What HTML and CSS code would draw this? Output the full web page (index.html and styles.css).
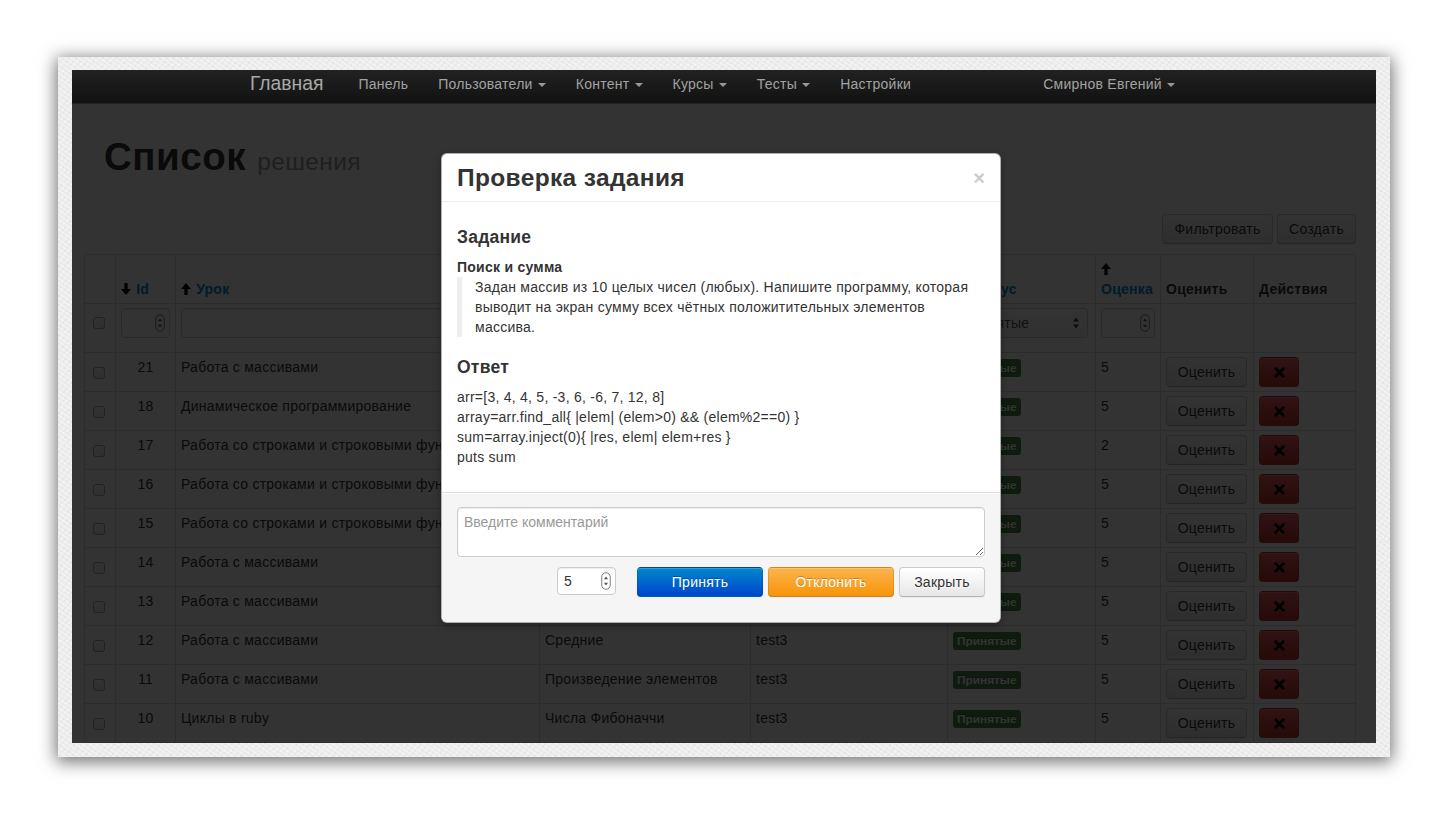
FILE: index.html
```html
<!DOCTYPE html>
<html lang="ru">
<head>
<meta charset="utf-8">
<title>Список решения</title>
<link rel="stylesheet" href="styles.css">
</head>
<body>
<svg class="defs" width="0" height="0" aria-hidden="true">
  <symbol id="i-up" viewBox="0 0 10 12"><path d="M5 0l5 6H6.6v6H3.4V6H0z"/></symbol>
  <symbol id="i-down" viewBox="0 0 10 12"><path d="M3.4 0h3.2v6H10l-5 6-5-6h3.4z"/></symbol>
  <symbol id="i-remove" viewBox="0 0 12 12"><path d="M2 2l8 8M10 2l-8 8" stroke="#000" stroke-width="3" stroke-linecap="square"/></symbol>
  <symbol id="i-step" viewBox="0 0 10 18"><rect x="0.75" y="0.75" width="8.5" height="16.5" rx="4.2" fill="#fff" stroke="#7d7d7d" stroke-width="1"/><path d="M3 7.2L5 4.4 7 7.2z M3 10.8L5 13.6 7 10.8z" fill="#555"/></symbol>
  <symbol id="i-sel" viewBox="0 0 8 14"><path d="M1 5.5L4 1.5 7 5.5z M1 8.5L4 12.5 7 8.5z" fill="#444"/></symbol>
</svg>
<div class="stage">
  <div class="frame">
    <div class="viewport">
      <header class="navbar">
        <div class="nav-inner">
          <a class="brand">Главная</a>
          <ul class="nav">
            <li><a>Панель</a></li>
            <li><a>Пользователи <b class="caret"></b></a></li>
            <li><a>Контент <b class="caret"></b></a></li>
            <li><a>Курсы <b class="caret"></b></a></li>
            <li><a>Тесты <b class="caret"></b></a></li>
            <li><a>Настройки</a></li>
          </ul>
          <ul class="nav nav-right">
            <li><a>Смирнов Евгений <b class="caret"></b></a></li>
          </ul>
        </div>
      </header>

      <main class="content">
        <h1 class="page-title">Список <small>решения</small></h1>
        <div class="toolbar">
          <button class="btn btn-filter">Фильтровать</button>
          <button class="btn btn-create">Создать</button>
        </div>

        <table class="grid">
          <colgroup>
            <col class="c-check"><col class="c-id"><col class="c-lesson"><col class="c-task"><col class="c-user"><col class="c-status"><col class="c-mark"><col class="c-rate"><col class="c-act">
          </colgroup>
          <thead>
            <tr class="head">
              <th></th>
              <th><a class="sort"><svg class="arr"><use href="#i-down"/></svg> Id</a></th>
              <th><a class="sort"><svg class="arr"><use href="#i-up"/></svg> Урок</a></th>
              <th><a class="sort"><svg class="arr"><use href="#i-up"/></svg> Задача</a></th>
              <th><a class="sort"><svg class="arr"><use href="#i-up"/></svg> Ученик</a></th>
              <th><a class="sort"><svg class="arr"><use href="#i-up"/></svg> Статус</a></th>
              <th><a class="sort"><svg class="arr"><use href="#i-up"/></svg> Оценка</a></th>
              <th>Оценить</th>
              <th>Действия</th>
            </tr>
            <tr class="filters">
              <th><input class="check check-f" type="checkbox"></th>
              <th><div class="num num-f"><span></span><svg class="step"><use href="#i-step"/></svg></div></th>
              <th><input class="field" type="text"></th>
              <th><input class="field" type="text"></th>
              <th><input class="field" type="text"></th>
              <th><div class="select"><span>Принятые</span><svg class="sel"><use href="#i-sel"/></svg></div></th>
              <th><div class="num num-f"><span></span><svg class="step"><use href="#i-step"/></svg></div></th>
              <th></th>
              <th></th>
            </tr>
          </thead>
          <tbody>
            <tr><td class="cb"><input class="check" type="checkbox"></td><td class="id">21</td><td>Работа с массивами</td><td>Поиск и сумма</td><td>test3</td><td><span class="label">Принятые</span></td><td>5</td><td><button class="btn btn-rate">Оценить</button></td><td><button class="btn btn-danger"><svg class="rm"><use href="#i-remove"/></svg></button></td></tr>
            <tr><td class="cb"><input class="check" type="checkbox"></td><td class="id">18</td><td>Динамическое программирование</td><td>Задача о рюкзаке</td><td>test3</td><td><span class="label">Принятые</span></td><td>5</td><td><button class="btn btn-rate">Оценить</button></td><td><button class="btn btn-danger"><svg class="rm"><use href="#i-remove"/></svg></button></td></tr>
            <tr><td class="cb"><input class="check" type="checkbox"></td><td class="id">17</td><td>Работа со строками и строковыми функциями</td><td>Палиндромы</td><td>test3</td><td><span class="label">Принятые</span></td><td>2</td><td><button class="btn btn-rate">Оценить</button></td><td><button class="btn btn-danger"><svg class="rm"><use href="#i-remove"/></svg></button></td></tr>
            <tr><td class="cb"><input class="check" type="checkbox"></td><td class="id">16</td><td>Работа со строками и строковыми функциями</td><td>Подсчёт слов</td><td>test3</td><td><span class="label">Принятые</span></td><td>5</td><td><button class="btn btn-rate">Оценить</button></td><td><button class="btn btn-danger"><svg class="rm"><use href="#i-remove"/></svg></button></td></tr>
            <tr><td class="cb"><input class="check" type="checkbox"></td><td class="id">15</td><td>Работа со строками и строковыми функциями</td><td>Замена символов</td><td>test3</td><td><span class="label">Принятые</span></td><td>5</td><td><button class="btn btn-rate">Оценить</button></td><td><button class="btn btn-danger"><svg class="rm"><use href="#i-remove"/></svg></button></td></tr>
            <tr><td class="cb"><input class="check" type="checkbox"></td><td class="id">14</td><td>Работа с массивами</td><td>Максимум</td><td>test3</td><td><span class="label">Принятые</span></td><td>5</td><td><button class="btn btn-rate">Оценить</button></td><td><button class="btn btn-danger"><svg class="rm"><use href="#i-remove"/></svg></button></td></tr>
            <tr><td class="cb"><input class="check" type="checkbox"></td><td class="id">13</td><td>Работа с массивами</td><td>Сортировка</td><td>test3</td><td><span class="label">Принятые</span></td><td>5</td><td><button class="btn btn-rate">Оценить</button></td><td><button class="btn btn-danger"><svg class="rm"><use href="#i-remove"/></svg></button></td></tr>
            <tr><td class="cb"><input class="check" type="checkbox"></td><td class="id">12</td><td>Работа с массивами</td><td>Средние</td><td>test3</td><td><span class="label">Принятые</span></td><td>5</td><td><button class="btn btn-rate">Оценить</button></td><td><button class="btn btn-danger"><svg class="rm"><use href="#i-remove"/></svg></button></td></tr>
            <tr><td class="cb"><input class="check" type="checkbox"></td><td class="id">11</td><td>Работа с массивами</td><td>Произведение элементов</td><td>test3</td><td><span class="label">Принятые</span></td><td>5</td><td><button class="btn btn-rate">Оценить</button></td><td><button class="btn btn-danger"><svg class="rm"><use href="#i-remove"/></svg></button></td></tr>
            <tr><td class="cb"><input class="check" type="checkbox"></td><td class="id">10</td><td>Циклы в ruby</td><td>Числа Фибоначчи</td><td>test3</td><td><span class="label">Принятые</span></td><td>5</td><td><button class="btn btn-rate">Оценить</button></td><td><button class="btn btn-danger"><svg class="rm"><use href="#i-remove"/></svg></button></td></tr>
          </tbody>
        </table>
        <div class="backdrop"></div>
      </main>

      <div class="modal">
        <div class="modal-header">
          <button class="close">×</button>
          <h3>Проверка задания</h3>
        </div>
        <div class="modal-body">
          <h4>Задание</h4>
          <h5>Поиск и сумма</h5>
          <blockquote><p>Задан массив из 10 целых чисел (любых). Напишите программу, которая<br>выводит на экран сумму всех чётных положитительных элементов<br>массива.</p></blockquote>
          <h4>Ответ</h4>
          <p class="answer">arr=[3, 4, 4, 5, -3, 6, -6, 7, 12, 8]<br>array=arr.find_all{ |elem| (elem&gt;0) &amp;&amp; (elem%2==0) }<br>sum=array.inject(0){ |res, elem| elem+res }<br>puts sum</p>
        </div>
        <div class="modal-footer">
          <textarea class="comment" placeholder="Введите комментарий"></textarea>
          <div class="actions">
            <div class="num num-m"><span>5</span><svg class="step"><use href="#i-step"/></svg></div>
            <button class="btn btn-primary btn-wide">Принять</button>
            <button class="btn btn-warning btn-wide">Отклонить</button>
            <button class="btn btn-close">Закрыть</button>
          </div>
        </div>
      </div>
    </div>
  </div>
</div>
</body>
</html>
```

FILE: styles.css
```css
* { box-sizing: border-box; }
html, body { margin: 0; padding: 0; }
body {
  background: #fff;
  font-family: "Liberation Sans", Arial, Helvetica, sans-serif;
  font-size: 14px;
  line-height: 20px;
  letter-spacing: 0.25px;
  color: #333;
}
.defs { position: absolute; width: 0; height: 0; overflow: hidden; }

/* photo frame */
.stage { padding: 57px 58px 59px; }
.frame {
  width: 1332px;
  height: 700px;
  padding: 13px 14px 14px;
  background-color: #ededed;
  background-image:
    repeating-linear-gradient(35deg, rgba(255,255,255,.45) 0 1px, transparent 1px 4px),
    repeating-linear-gradient(-50deg, rgba(0,0,0,.035) 0 1px, transparent 1px 5px);
  box-shadow: 0 3px 16px 2px rgba(0,0,0,.55);
}
.viewport {
  position: relative;
  width: 1304px;
  height: 673px;
  overflow: hidden;
  background: #fff;
}

/* navbar */
.navbar {
  height: 34px;
  background: linear-gradient(#222, #111);
  border-bottom: 1px solid #252525;
}
.nav-inner {
  display: flex;
  align-items: flex-start;
  height: 100%;
  padding: 4px 186px 0 158px;
}
.brand {
  display: block;
  padding: 0 20px;
  font-size: 19.3px;
  line-height: 20px;
  letter-spacing: 0;
  color: #a8a8a8;
}
.nav { display: flex; list-style: none; margin: 0; padding: 0; }
.nav a {
  display: block;
  padding: 0 15px;
  line-height: 20px;
  color: #a2a2a2;
  text-decoration: none;
}
.nav-right { margin-left: auto; }
.caret {
  display: inline-block;
  width: 0;
  height: 0;
  margin-left: 1px;
  vertical-align: middle;
  border-top: 4px solid #999;
  border-left: 4px solid transparent;
  border-right: 4px solid transparent;
}

/* page content */
.content {
  position: relative;
  height: 639px;
  padding: 33px 20px 0 12px;
}
.page-title {
  margin: 0 0 0 20px;
  font-size: 38.5px;
  line-height: 40px;
  font-weight: bold;
  letter-spacing: 0.5px;
  color: #333;
}
.page-title small {
  font-size: 24.5px;
  font-weight: normal;
  letter-spacing: 0.4px;
  color: #999;
}
.toolbar {
  display: flex;
  justify-content: flex-end;
  gap: 4px;
  margin-top: 32px;
}

.btn {
  display: inline-block;
  margin: 0;
  padding: 4px 12px;
  font-family: inherit;
  font-size: 14px;
  line-height: 20px;
  letter-spacing: inherit;
  color: #333;
  text-align: center;
  text-shadow: 0 1px 1px rgba(255,255,255,.75);
  background: linear-gradient(#fff, #e6e6e6);
  border: 1px solid #ccc;
  border-bottom-color: #b3b3b3;
  border-radius: 4px;
  box-shadow: inset 0 1px 0 rgba(255,255,255,.2), 0 1px 2px rgba(0,0,0,.05);
  vertical-align: middle;
}
.btn-filter { width: 111px; padding-left: 0; padding-right: 0; }
.btn-create { width: 79px; padding-left: 0; padding-right: 0; }
.btn-rate { width: 81px; padding-left: 0; padding-right: 0; }
.btn-danger {
  background: linear-gradient(#ee5f5b, #bd362f);
  border-color: rgba(0,0,0,.1) rgba(0,0,0,.1) rgba(0,0,0,.25);
  height: 30px;
  width: 40px;
  padding: 0;
}
.btn-primary {
  color: #fff;
  text-shadow: 0 -1px 0 rgba(0,0,0,.25);
  background: linear-gradient(#0088cc, #0044cc);
  border-color: rgba(0,0,0,.1) rgba(0,0,0,.1) rgba(0,0,0,.25);
}
.btn-warning {
  color: #fff;
  text-shadow: 0 -1px 0 rgba(0,0,0,.25);
  background: linear-gradient(#fbb450, #f89406);
  border-color: rgba(0,0,0,.1) rgba(0,0,0,.1) rgba(0,0,0,.25);
}
.rm { display: block; width: 11px; height: 11px; margin: 0 auto; }

/* table */
.grid {
  width: 1272px;
  margin-top: 10px;
  table-layout: fixed;
  border-collapse: separate;
  border-spacing: 0;
  border: 1px solid #ddd;
  border-left: 0;
  border-radius: 4px;
}
.c-check { width: 31px; }
.c-id { width: 60px; }
.c-lesson { width: 364px; }
.c-task { width: 211px; }
.c-user { width: 197px; }
.c-status { width: 148px; }
.c-mark { width: 65px; }
.c-rate { width: 93px; }
.c-act { width: 102px; }
.grid th, .grid td {
  padding: 4px 5px;
  border-left: 1px solid #ddd;
  border-top: 1px solid #ddd;
  text-align: left;
  vertical-align: top;
  line-height: 20px;
  white-space: nowrap;
  overflow: hidden;
}
.grid tr.head th {
  border-top: 0;
  vertical-align: bottom;
  font-weight: bold;
  height: 48px;
  white-space: normal;
}
.grid tr.head th:first-child { border-top-left-radius: 4px; }
.sort { color: #0088cc; text-decoration: none; }
.arr { width: 10px; height: 12px; fill: #000; vertical-align: -1px; margin-right: 1px; }
.grid td.id { text-align: center; }
.grid td.cb { vertical-align: middle; padding-top: 5px; }

.check {
  appearance: none;
  -webkit-appearance: none;
  display: block;
  width: 12px;
  height: 12px;
  margin: 0 0 0 3px;
  border: 1px solid #a8a8a8;
  border-radius: 3px;
  background: linear-gradient(#fff, #ececec);
}
.check-f { margin-top: 9px; }

.filters th { padding-bottom: 14px; }
.field {
  display: block;
  width: 100%;
  height: 30px;
  padding: 4px 6px;
  font: inherit;
  border: 1px solid #ccc;
  border-radius: 4px;
  background: #fff;
  box-shadow: inset 0 1px 1px rgba(0,0,0,.075);
}
.num {
  display: flex;
  align-items: center;
  justify-content: space-between;
  background: #fff;
  border: 1px solid #ccc;
  border-radius: 4px;
  box-shadow: inset 0 1px 1px rgba(0,0,0,.075);
  font-weight: normal;
}
.num-f { width: 100%; height: 30px; padding: 0 4px 0 6px; }
.step { width: 10px; height: 18px; }
.select {
  display: flex;
  align-items: center;
  justify-content: space-between;
  width: 135px;
  height: 30px;
  padding: 0 7px 0 8px;
  border: 1px solid #ccc;
  border-radius: 4px;
  background: linear-gradient(#fff, #f3f3f3);
  font-weight: normal;
  color: #555;
}
.sel { width: 8px; height: 14px; }

.label {
  display: inline-block;
  padding: 2px 4px;
  font-size: 11.844px;
  font-weight: bold;
  line-height: 14px;
  letter-spacing: 0;
  color: #fff;
  text-shadow: 0 -1px 0 rgba(0,0,0,.25);
  background: #468847;
  border-radius: 3px;
  vertical-align: baseline;
}

.backdrop {
  position: absolute;
  inset: 0;
  background: rgba(0,0,0,.8);
}

/* modal */
.modal {
  position: absolute;
  top: 83px;
  left: 369px;
  width: 560px;
  background: #fff;
  border: 1px solid rgba(0,0,0,.3);
  border-radius: 6px;
  box-shadow: 0 3px 7px rgba(0,0,0,.3);
}
.modal-header {
  padding: 9px 15px 8px;
  border-bottom: 1px solid #eee;
}
.modal-header h3 {
  margin: 0;
  font-size: 24.5px;
  line-height: 30px;
  font-weight: bold;
  letter-spacing: 0.35px;
  color: #333;
}
.close {
  float: right;
  margin-top: 5px;
  padding: 0;
  border: 0;
  background: none;
  font-family: inherit;
  font-size: 20px;
  font-weight: bold;
  line-height: 20px;
  color: #000;
  opacity: .2;
}
.modal-body { padding: 15px; }
.modal-body h4 {
  margin: 10px 0;
  font-size: 17.5px;
  line-height: 20px;
  font-weight: bold;
}
.modal-body h5 {
  margin: 10px 0 0;
  font-size: 14px;
  line-height: 20px;
  font-weight: bold;
}
.modal-body blockquote {
  margin: 0 0 20px;
  padding: 0 0 0 13px;
  border-left: 5px solid #eee;
}
.modal-body blockquote p { margin: 0; font-size: 14px; line-height: 20px; }
.answer { margin: 0 0 10px; }

.modal-footer {
  padding: 14px 15px 15px;
  background: #f5f5f5;
  border-top: 1px solid #ddd;
  border-radius: 0 0 6px 6px;
  box-shadow: inset 0 1px 0 #fff;
}
.comment {
  display: block;
  width: 100%;
  height: 50px;
  margin: 0 0 10px;
  padding: 4px 6px;
  font: inherit;
  color: #555;
  border: 1px solid #ccc;
  border-radius: 4px;
  background: #fff;
  box-shadow: inset 0 1px 1px rgba(0,0,0,.075);
}
.comment::placeholder { color: #999; }
.actions {
  display: flex;
  justify-content: flex-end;
  align-items: flex-start;
  gap: 5px;
  margin-bottom: 10px;
}
.num-m {
  width: 59px;
  height: 28px;
  padding: 0 4px 0 6px;
  margin-right: 16px;
  color: #333;
}
.btn-wide { width: 126px; }
.btn-close { width: 86px; padding-left: 0; padding-right: 0; }
```
